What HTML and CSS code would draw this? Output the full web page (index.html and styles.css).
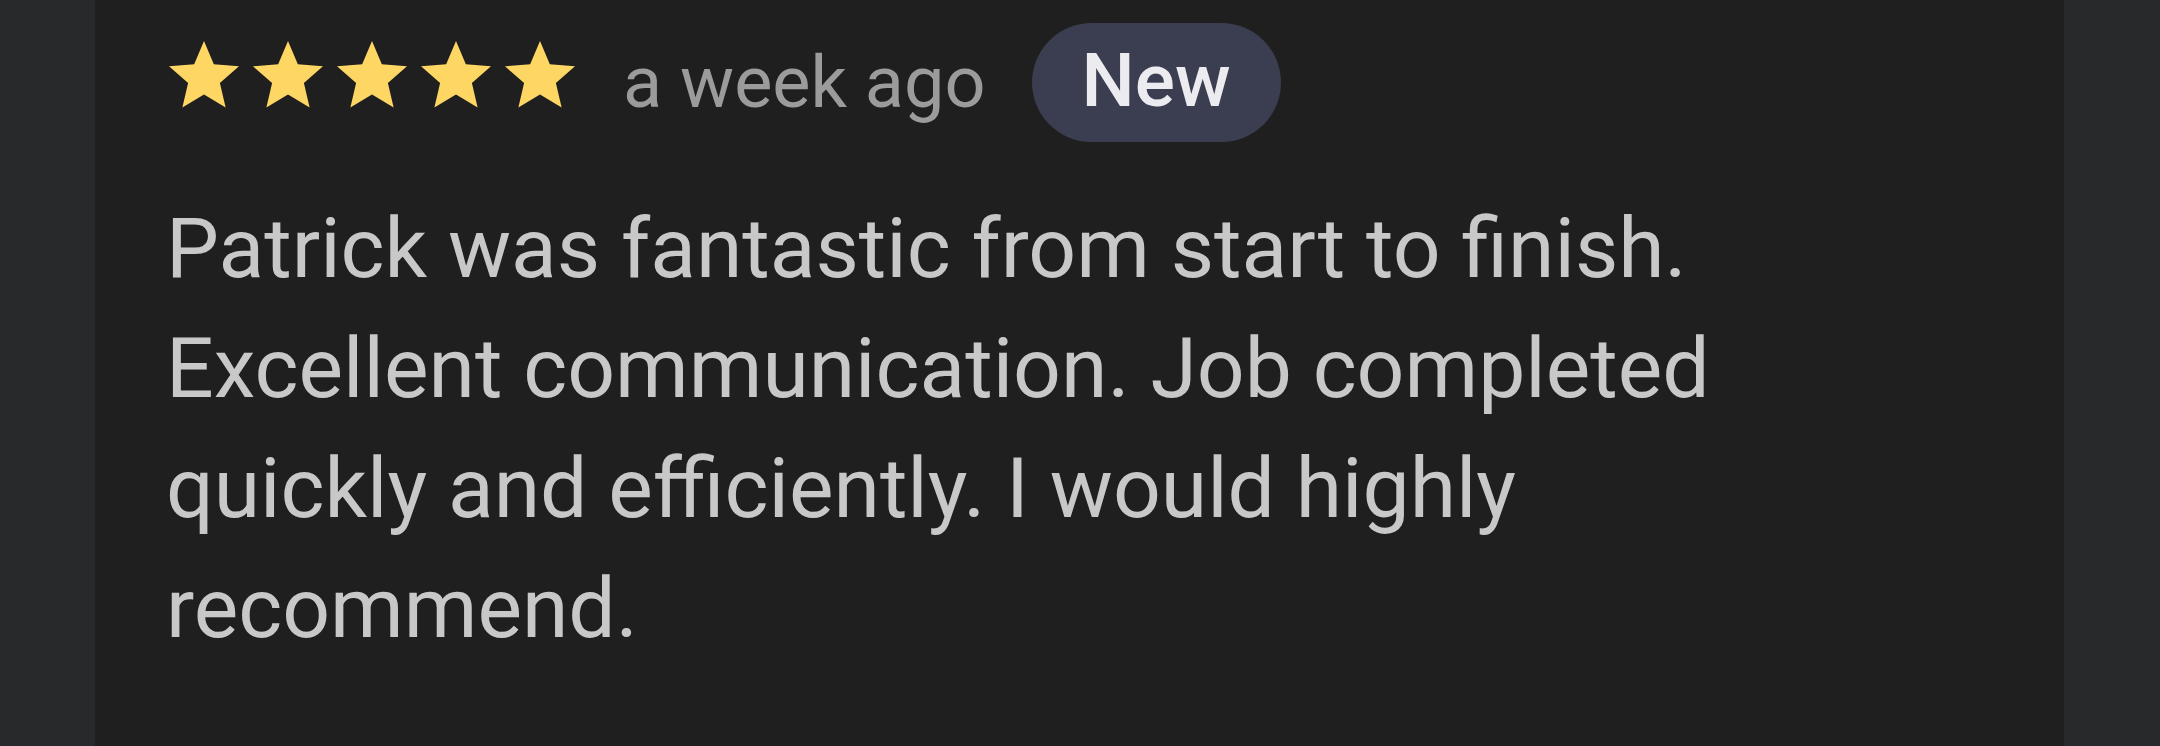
FILE: index.html
```html
<!DOCTYPE html>
<html lang="en">
<head>
<meta charset="utf-8">
<title>Review</title>
<link rel="stylesheet" href="styles.css">
</head>
<body>
<div class="page">
  <div class="side side-left"></div>
  <main class="panel">
    <div class="meta">
      <div class="stars">
        <svg class="star" viewBox="0 0 24 24"><path d="M12 17.27L18.18 21l-1.64-7.03L22 9.24l-7.19-.61L12 2 9.19 8.63 2 9.24l5.46 4.730L5.82 21z"/></svg>
        <svg class="star" viewBox="0 0 24 24"><path d="M12 17.27L18.18 21l-1.64-7.03L22 9.24l-7.19-.61L12 2 9.19 8.63 2 9.24l5.46 4.73L5.82 21z"/></svg>
        <svg class="star" viewBox="0 0 24 24"><path d="M12 17.27L18.18 21l-1.64-7.03L22 9.24l-7.19-.61L12 2 9.19 8.63 2 9.24l5.46 4.73L5.82 21z"/></svg>
        <svg class="star" viewBox="0 0 24 24"><path d="M12 17.27L18.18 21l-1.64-7.03L22 9.24l-7.19-.61L12 2 9.19 8.63 2 9.24l5.46 4.73L5.82 21z"/></svg>
        <svg class="star" viewBox="0 0 24 24"><path d="M12 17.27L18.18 21l-1.64-7.03L22 9.24l-7.19-.61L12 2 9.19 8.63 2 9.24l5.46 4.73L5.82 21z"/></svg>
      </div>
      <span class="date">a week ago</span>
      <span class="badge">New</span>
    </div>
    <p class="text">Patrick was fantastic from start to finish. Excellent communication. Job completed quickly and efficiently. I would highly recommend.</p>
  </main>
  <div class="side"></div>
</div>
</body>
</html>
```

FILE: styles.css
```css
html, body {
  margin: 0;
  padding: 0;
  background: #1f1f1f;
}
.page {
  display: flex;
  width: 2160px;
  height: 746px;
  overflow: hidden;
  font-family: Roboto, "Liberation Sans", sans-serif;
}
.side {
  width: 96px;
  flex: 0 0 96px;
  background: #28292b;
}
.side-left {
  width: 95px;
  flex-basis: 95px;
}
.panel {
  flex: 1;
  background: #1f1f1f;
  padding: 23px 0 0 67px;
  box-sizing: border-box;
}
.meta {
  display: flex;
  align-items: center;
  height: 119px;
}
.stars {
  display: flex;
  margin-top: -14px;
}
.star {
  width: 84px;
  height: 84px;
  fill: #fdd663;
  display: block;
}
.date {
  margin-left: 41px;
  font-size: 72px;
  color: #9b9b9b;
  line-height: 1;
}
.badge {
  margin-left: 46px;
  height: 119px;
  padding: 0 50px 5px;
  border-radius: 60px;
  background: #3b3e50;
  color: #ececf0;
  font-size: 75px;
  font-weight: 500;
  display: flex;
  align-items: center;
  box-sizing: border-box;
}
.text {
  margin: 47px 0 0 4px;
  max-width: 1640px;
  font-size: 84px;
  line-height: 120px;
  color: #c8c8c8;
}
```
